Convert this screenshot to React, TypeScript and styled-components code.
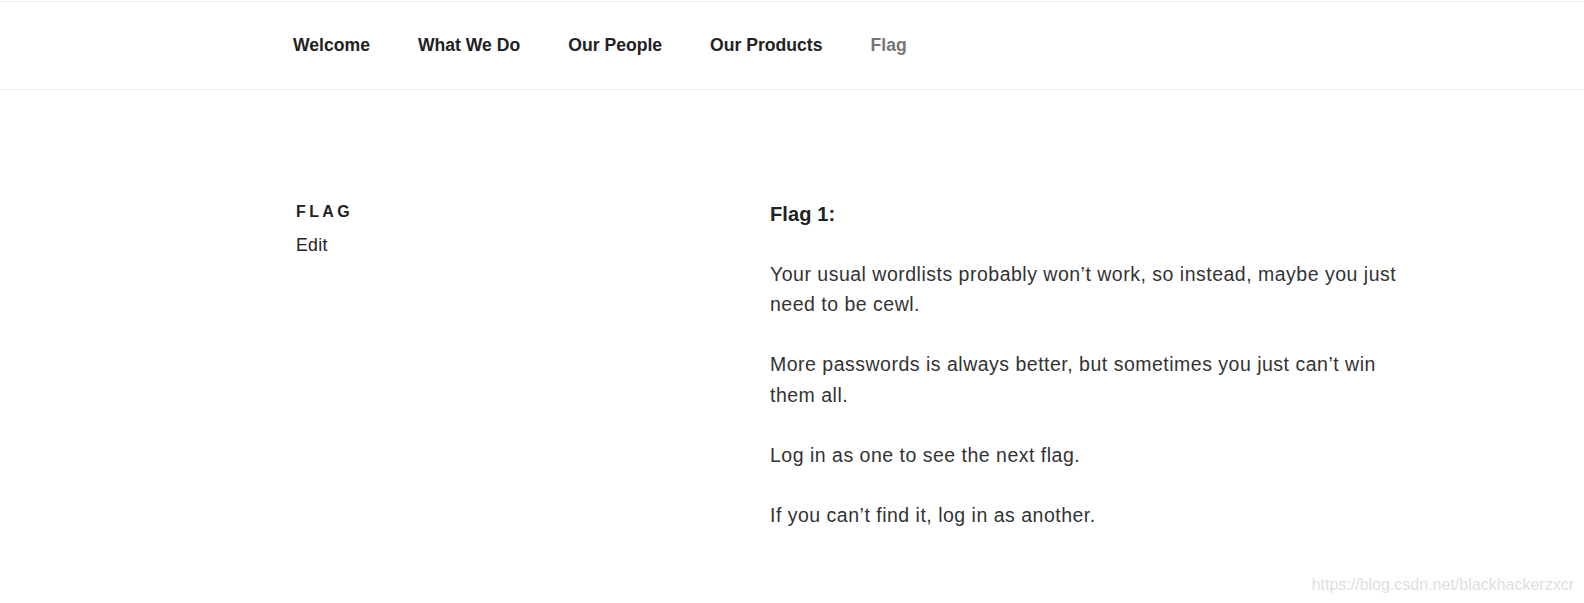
import React from 'react';
import styled, { createGlobalStyle } from 'styled-components';

const GlobalStyle = createGlobalStyle`
  html, body {
    margin: 0;
    padding: 0;
    background: #fff;
  }
  body {
    font-family: "Liberation Sans", Arial, sans-serif;
    color: #333;
  }
`;

const Page = styled.div`
  position: relative;
  min-height: 100vh;
  overflow: hidden;
`;

const NavBar = styled.nav`
  margin-top: 1px;
  height: 85px;
  padding-bottom: 2px;
  border-top: 1px solid #eee;
  border-bottom: 1px solid #eee;
  display: flex;
  align-items: center;
  padding-left: 293px;
`;

const NavList = styled.ul`
  display: flex;
  gap: 48px;
  list-style: none;
  margin: 0;
  padding: 0;
`;

const NavLink = styled.a<{ $current?: boolean }>`
  font-size: 17.6px;
  font-weight: 700;
  line-height: 26px;
  color: ${(p) => (p.$current ? '#767676' : '#222')};
  text-decoration: none;
`;

const Main = styled.main`
  display: flex;
  align-items: flex-start;
  padding: 111px 0 0 296px;
`;

const EntryHeader = styled.header`
  width: 474px;
  flex-shrink: 0;
  padding-top: 1px;
`;

const PageTitle = styled.h1`
  margin: 0;
  font-size: 16px;
  line-height: 20px;
  font-weight: 800;
  letter-spacing: 3.4px;
  text-transform: uppercase;
  color: #222;
`;

const EditLink = styled.a`
  display: block;
  margin-top: 10px;
  font-size: 17.7px;
  line-height: 27px;
  letter-spacing: 0.3px;
  color: #222;
  text-decoration: none;
`;

const EntryContent = styled.div`
  width: 645px;
  margin-top: -2px;
`;

const FlagHeading = styled.p`
  margin: 0 0 29px;
  font-size: 20px;
  line-height: 30.5px;
  font-weight: 700;
  letter-spacing: 0.1px;
  color: #222;
`;

const Paragraph = styled.p`
  margin: 0 0 29.5px;
  font-size: 19.5px;
  line-height: 30.5px;
  letter-spacing: 0.5px;
  color: #333;
`;

const Watermark = styled.div`
  position: absolute;
  right: 10px;
  bottom: 9px;
  font-size: 16px;
  line-height: 18px;
  color: #e0e0e0;
`;

const menu = ['Welcome', 'What We Do', 'Our People', 'Our Products', 'Flag'];

const App: React.FC = () => {
  return (
    <Page>
      <GlobalStyle />
      <NavBar>
        <NavList>
          {menu.map((item) => (
            <li key={item}>
              <NavLink href="#" $current={item === 'Flag'}>
                {item}
              </NavLink>
            </li>
          ))}
        </NavList>
      </NavBar>
      <Main>
        <EntryHeader>
          <PageTitle>Flag</PageTitle>
          <EditLink href="#">Edit</EditLink>
        </EntryHeader>
        <EntryContent>
          <FlagHeading>Flag 1:</FlagHeading>
          <Paragraph>
            Your usual wordlists probably won’t work, so instead, maybe you just need to be cewl.
          </Paragraph>
          <Paragraph>
            More passwords is always better, but sometimes you just can’t win them all.
          </Paragraph>
          <Paragraph>Log in as one to see the next flag.</Paragraph>
          <Paragraph>If you can’t find it, log in as another.</Paragraph>
        </EntryContent>
      </Main>
      <Watermark>https://blog.csdn.net/blackhackerzxcr</Watermark>
    </Page>
  );
};

export default App;
